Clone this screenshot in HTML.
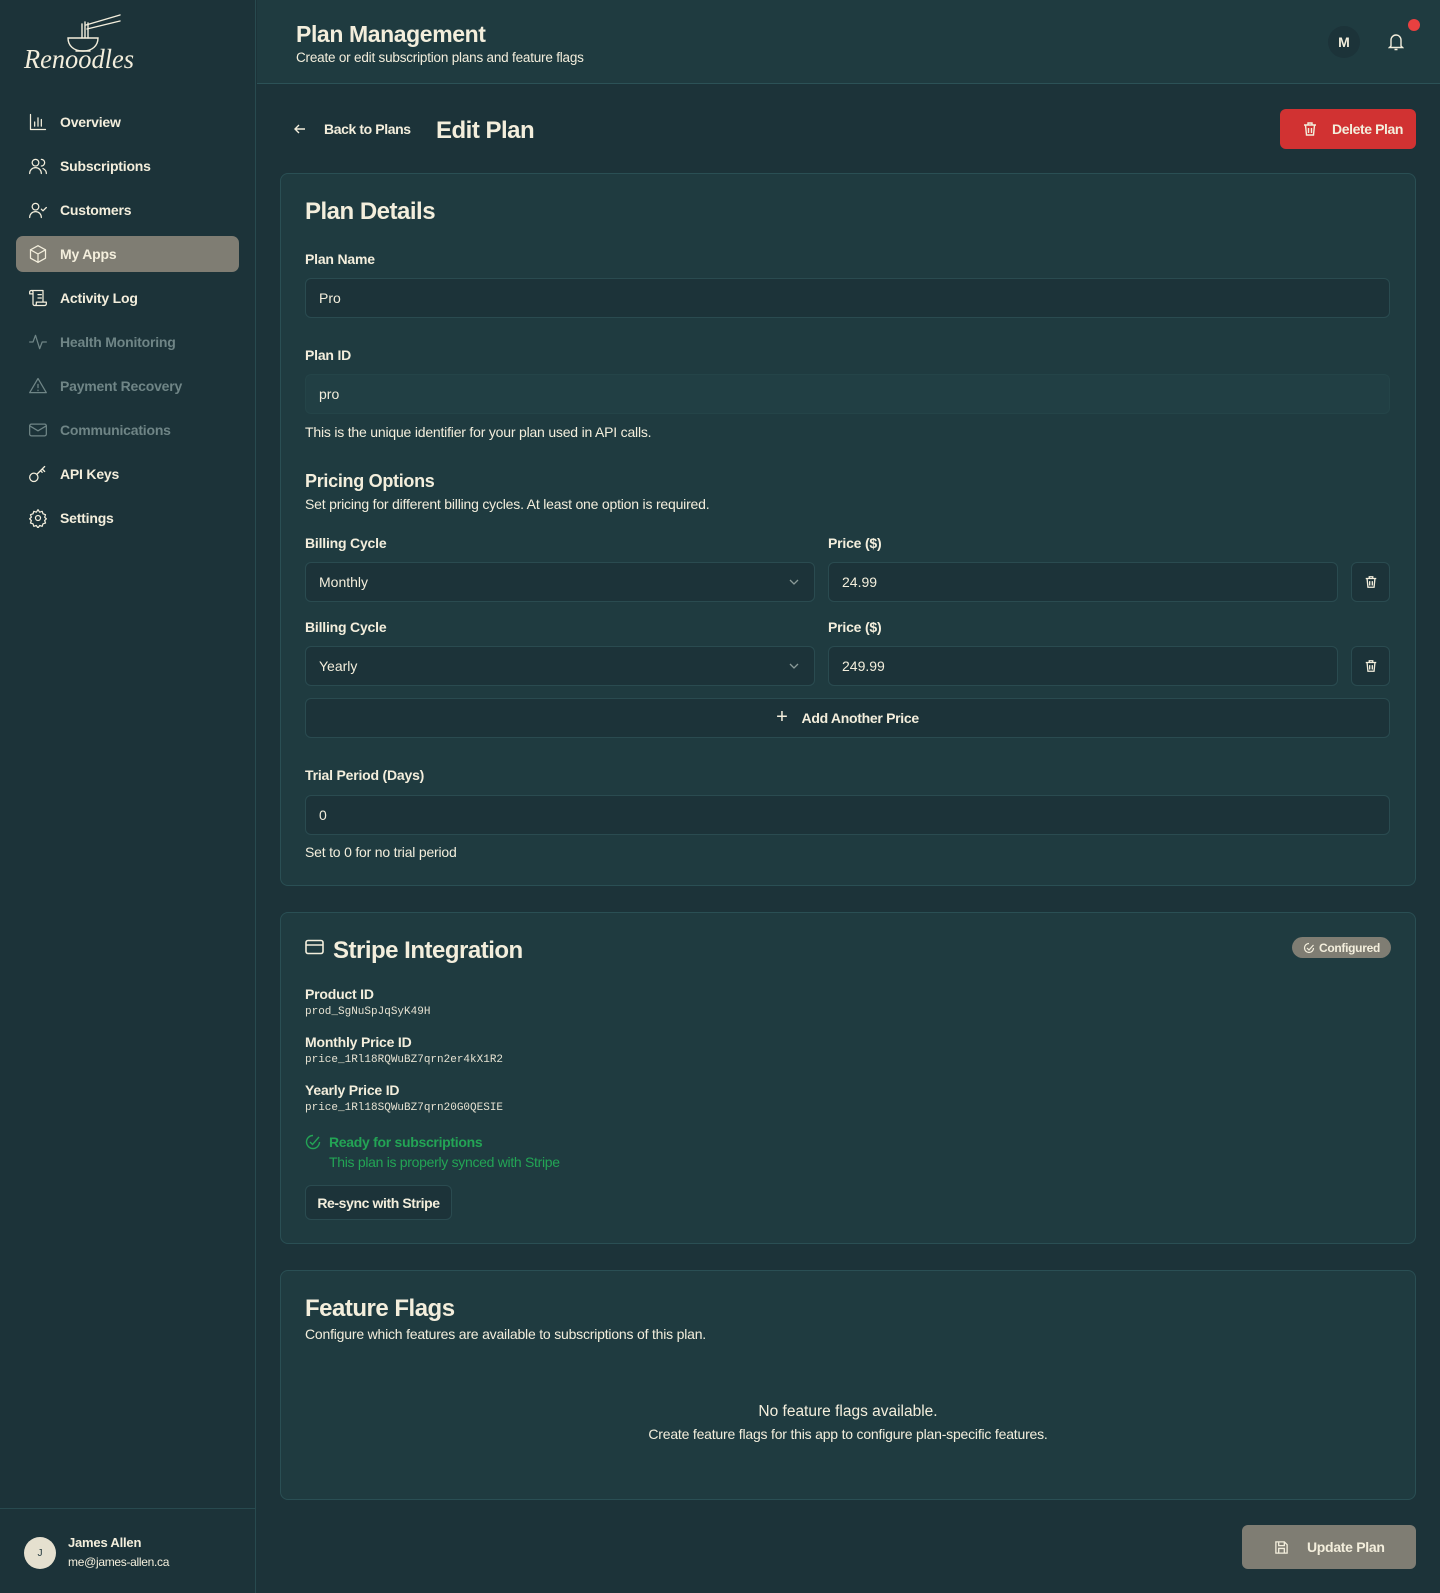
<!DOCTYPE html>
<html><head><meta charset="utf-8"><style>
*{box-sizing:border-box;margin:0;padding:0}
body{width:1440px;height:1593px;background:#1c3339;font-family:"Liberation Sans",sans-serif;color:#f3eedc;position:relative;overflow:hidden;font-size:14px}
.a{position:absolute}
.side{left:0;top:0;width:256px;height:1593px;background:#1c3339;border-right:1px solid #284a4f}
.nav{left:28px;height:20px;display:flex;align-items:center;font-weight:bold;font-size:14px;letter-spacing:-.2px}
.nav svg{width:20px;height:20px;margin-right:12px;fill:none;stroke:currentColor;stroke-width:1.5;stroke-linecap:round;stroke-linejoin:round}
.dim{color:#6f8586}
.hdr{left:257px;top:0;width:1183px;height:84px;background:#1f3b40;border-bottom:1px solid #2c5257}
.card{background:#1f3b40;border:1px solid #2a4f54;border-radius:8px}
.lbl{font-weight:bold;font-size:14px;letter-spacing:-.2px}
.inp{background:#1c3339;border:1px solid #2a4b50;border-radius:6px;height:40px;display:flex;align-items:center;padding-left:13px;font-size:14px}
.mono{font-family:"Liberation Mono",monospace;font-size:11px;color:#e6e2d2}
h2{font-size:24px;font-weight:bold;letter-spacing:-.5px}
</style></head><body>
<div class="a side">
 <svg class="a" style="left:22px;top:8px" width="120" height="66" viewBox="0 0 120 66">
  <g fill="none" stroke="#f3eedc" stroke-width="1.4" stroke-linecap="round">
   <path d="M46 30h30c0 8-6 13-15 13s-15-5-15-13z"/><path d="M54 43h14"/>
   <path d="M60 30V16M63 30V14M66 30V15"/><path d="M64 17l34-10M65 21l33-8"/>
  </g>
  <text x="2" y="60" font-family="Liberation Serif,serif" font-style="italic" font-size="27" fill="#f3eedc" textLength="110" lengthAdjust="spacingAndGlyphs">Renoodles</text>
 </svg>
 <div class="a nav" style="top:112px"><svg viewBox="0 0 24 24"><path d="M3 3v18h18M8 17v-5M12 17V7M16 17v-8"/></svg>Overview</div>
 <div class="a nav" style="top:156px"><svg viewBox="0 0 24 24"><circle cx="9" cy="8" r="4"/><path d="M2 21c0-4 3-7 7-7s7 3 7 7M16 4a4 4 0 010 8M22 21c0-3-2-5-4-6"/></svg>Subscriptions</div>
 <div class="a nav" style="top:200px"><svg viewBox="0 0 24 24"><circle cx="9" cy="8" r="4"/><path d="M2 21c0-4 3-7 7-7s7 3 7 7M16 11l2 2 4-4"/></svg>Customers</div>
 <div class="a" style="left:16px;top:236px;width:223px;height:36px;background:#7f7d73;border-radius:7px"></div>
 <div class="a nav" style="top:244px"><svg viewBox="0 0 24 24"><path d="M12 2l9 5v10l-9 5-9-5V7z"/><path d="M3 7l9 5 9-5M12 12v10"/></svg>My Apps</div>
 <div class="a nav" style="top:288px"><svg viewBox="0 0 24 24"><path d="M8 21h12a2 2 0 002-2v-2H10v2a2 2 0 11-4 0V5a2 2 0 00-2-2h14v14M4 3a2 2 0 00-2 2v2h4M12 8h4M12 12h4"/></svg>Activity Log</div>
 <div class="a nav dim" style="top:332px"><svg viewBox="0 0 24 24"><path d="M2 12h4l3-8 5 16 3-8h5"/></svg>Health Monitoring</div>
 <div class="a nav dim" style="top:376px"><svg viewBox="0 0 24 24"><path d="M12 3L2 20h20z"/><path d="M12 10v4M12 17v.5"/></svg>Payment Recovery</div>
 <div class="a nav dim" style="top:420px"><svg viewBox="0 0 24 24"><rect x="2" y="5" width="20" height="14" rx="2"/><path d="M2 7l10 6 10-6"/></svg>Communications</div>
 <div class="a nav" style="top:464px"><svg viewBox="0 0 24 24"><circle cx="7" cy="16" r="5"/><path d="M11 12l9-9M17 6l3 3M15 8l2 2"/></svg>API Keys</div>
 <div class="a nav" style="top:508px"><svg viewBox="0 0 24 24"><circle cx="12" cy="12" r="3"/><path d="M12 2l2 3 3-1 1 3 3 1-1 3 2 2-2 2 1 3-3 1-1 3-3-1-2 3-2-3-3 1-1-3-3-1 1-3-2-2 2-2-1-3 3-1 1-3 3 1z"/></svg>Settings</div>
 <div class="a" style="left:0;top:1508px;width:256px;border-top:1px solid #284a4f"></div>
 <div class="a" style="left:24px;top:1537px;width:32px;height:32px;border-radius:50%;background:#e5e0cf;color:#1c3339;font-size:10px;display:flex;align-items:center;justify-content:center">J</div>
 <div class="a" style="left:68px;top:1535px;font-weight:bold;font-size:13px;letter-spacing:-.2px">James Allen</div>
 <div class="a" style="left:68px;top:1555px;font-size:12px;letter-spacing:-.3px">me@james-allen.ca</div>
</div>
<div class="a hdr">
 <div class="a" style="left:39px;top:21px;font-size:23px;font-weight:bold;letter-spacing:-.4px">Plan Management</div>
 <div class="a" style="left:39px;top:50px;font-size:13.5px;letter-spacing:-.2px">Create or edit subscription plans and feature flags</div>
 <div class="a" style="left:1071px;top:26px;width:32px;height:32px;border-radius:50%;background:#1c3339;display:flex;align-items:center;justify-content:center;font-weight:bold;font-size:14px">M</div>
 <svg class="a" style="left:1131px;top:33px" width="16" height="18" viewBox="0 0 16 18" fill="none" stroke="#f3eedc" stroke-width="1.4"><path d="M3 13V7a5 5 0 0110 0v6l1.5 1.5h-13zM6.5 16.5h3"/></svg>
 <div class="a" style="left:1151px;top:19px;width:12px;height:12px;border-radius:50%;background:#e84040"></div>
</div>
<svg class="a" style="left:293px;top:122px" width="14" height="14" viewBox="0 0 14 14" fill="none" stroke="#f3eedc" stroke-width="1.4"><path d="M12 7H2M6 3L2 7l4 4"/></svg>
<div class="a" style="left:324px;top:121px;font-weight:bold;font-size:14px;letter-spacing:-.4px">Back to Plans</div>
<div class="a" style="left:436px;top:117px;font-weight:bold;font-size:24px;letter-spacing:-.5px">Edit Plan</div>
<div class="a" style="left:1280px;top:109px;width:136px;height:40px;background:#d13232;border-radius:6px;display:flex;align-items:center;padding-left:22px;font-weight:bold;font-size:14px;letter-spacing:-.4px"><svg width="16" height="16" viewBox="0 0 16 16" fill="none" stroke="#f3eedc" stroke-width="1.4" style="margin-right:14px"><path d="M2 4h12M6 4V2h4v2M3.5 4l1 10h7l1-10M6.5 7v5M9.5 7v5"/></svg>Delete Plan</div>

<div class="a card" style="left:280px;top:173px;width:1136px;height:713px"></div>
<h2 class="a" style="left:305px;top:198px">Plan Details</h2>
<div class="a lbl" style="left:305px;top:251px">Plan Name</div>
<div class="a inp" style="left:305px;top:278px;width:1085px">Pro</div>
<div class="a lbl" style="left:305px;top:347px">Plan ID</div>
<div class="a inp" style="left:305px;top:374px;width:1085px;background:#213f44;border-color:#244448">pro</div>
<div class="a" style="left:305px;top:424px;letter-spacing:-.2px">This is the unique identifier for your plan used in API calls.</div>
<div class="a" style="left:305px;top:471px;font-size:18px;font-weight:bold;letter-spacing:-.3px">Pricing Options</div>
<div class="a" style="left:305px;top:496px;letter-spacing:-.2px">Set pricing for different billing cycles. At least one option is required.</div>
<div class="a lbl" style="left:305px;top:535px">Billing Cycle</div>
<div class="a lbl" style="left:828px;top:535px">Price ($)</div>
<div class="a inp" style="left:305px;top:562px;width:510px">Monthly</div>
<div class="a inp" style="left:828px;top:562px;width:510px">24.99</div>
<div class="a inp" style="left:1351px;top:562px;width:39px;padding:0;justify-content:center"><svg width="14" height="14" viewBox="0 0 16 16" fill="none" stroke="#f3eedc" stroke-width="1.5"><path d="M2 4h12M6 4V2h4v2M3.5 4l1 10h7l1-10M6.5 7v5M9.5 7v5"/></svg></div>
<div class="a lbl" style="left:305px;top:619px">Billing Cycle</div>
<div class="a lbl" style="left:828px;top:619px">Price ($)</div>
<div class="a inp" style="left:305px;top:646px;width:510px">Yearly</div>
<div class="a inp" style="left:828px;top:646px;width:510px">249.99</div>
<div class="a inp" style="left:1351px;top:646px;width:39px;padding:0;justify-content:center"><svg width="14" height="14" viewBox="0 0 16 16" fill="none" stroke="#f3eedc" stroke-width="1.5"><path d="M2 4h12M6 4V2h4v2M3.5 4l1 10h7l1-10M6.5 7v5M9.5 7v5"/></svg></div>
<svg class="a" style="left:788px;top:577px" width="12" height="10" viewBox="0 0 12 10" fill="none" stroke="#8a9a98" stroke-width="1.3"><path d="M2 3l4 4 4-4"/></svg>
<svg class="a" style="left:788px;top:661px" width="12" height="10" viewBox="0 0 12 10" fill="none" stroke="#8a9a98" stroke-width="1.3"><path d="M2 3l4 4 4-4"/></svg>
<div class="a inp" style="left:305px;top:698px;width:1085px;padding:0;justify-content:center;font-weight:bold;letter-spacing:-.3px"><span style="font-size:20px;font-weight:normal;margin-right:14px;position:relative;top:-1px">+</span>Add Another Price</div>
<div class="a lbl" style="left:305px;top:767px">Trial Period (Days)</div>
<div class="a inp" style="left:305px;top:795px;width:1085px">0</div>
<div class="a" style="left:305px;top:844px;letter-spacing:-.2px">Set to 0 for no trial period</div>

<div class="a card" style="left:280px;top:912px;width:1136px;height:332px"></div>
<svg class="a" style="left:305px;top:939px" width="19" height="16" viewBox="0 0 19 16" fill="none" stroke="#f3eedc" stroke-width="1.6"><rect x="1" y="1.5" width="17" height="13" rx="2"/><path d="M1 6h17"/></svg>
<h2 class="a" style="left:333px;top:937px">Stripe Integration</h2>
<div class="a" style="left:1292px;top:937px;width:99px;height:21px;border-radius:11px;background:#7f7d73;display:flex;align-items:center;padding-left:11px;font-size:12px;font-weight:bold;letter-spacing:-.3px"><svg width="12" height="12" viewBox="0 0 12 12" fill="none" stroke="#f3eedc" stroke-width="1.2" style="margin-right:4px"><path d="M10.5 6A4.5 4.5 0 116 1.5M4 6l2 2 4.5-5"/></svg>Configured</div>
<div class="a lbl" style="left:305px;top:986px">Product ID</div>
<div class="a mono" style="left:305px;top:1006px">prod_SgNuSpJqSyK49H</div>
<div class="a lbl" style="left:305px;top:1034px">Monthly Price ID</div>
<div class="a mono" style="left:305px;top:1054px">price_1Rl18RQWuBZ7qrn2er4kX1R2</div>
<div class="a lbl" style="left:305px;top:1082px">Yearly Price ID</div>
<div class="a mono" style="left:305px;top:1102px">price_1Rl18SQWuBZ7qrn20G0QESIE</div>
<svg class="a" style="left:305px;top:1134px" width="16" height="16" viewBox="0 0 16 16" fill="none" stroke="#23a455" stroke-width="1.4"><path d="M14.5 8A6.5 6.5 0 118 1.5M5 8l2.5 2.5L14 3"/></svg>
<div class="a" style="left:329px;top:1134px;color:#23a455;font-weight:bold;letter-spacing:-.3px">Ready for subscriptions</div>
<div class="a" style="left:329px;top:1154px;color:#23a455;letter-spacing:-.3px">This plan is properly synced with Stripe</div>
<div class="a" style="left:305px;top:1185px;width:147px;height:35px;background:#1c3339;border:1px solid #2a4b50;border-radius:6px;display:flex;align-items:center;justify-content:center;font-weight:bold;letter-spacing:-.4px">Re-sync with Stripe</div>

<div class="a card" style="left:280px;top:1270px;width:1136px;height:230px"></div>
<h2 class="a" style="left:305px;top:1295px">Feature Flags</h2>
<div class="a" style="left:305px;top:1326px;letter-spacing:-.2px">Configure which features are available to subscriptions of this plan.</div>
<div class="a" style="left:280px;top:1403px;width:1136px;text-align:center;font-size:15.5px">No feature flags available.</div>
<div class="a" style="left:280px;top:1426px;width:1136px;text-align:center;letter-spacing:-.2px">Create feature flags for this app to configure plan-specific features.</div>

<div class="a" style="left:1242px;top:1525px;width:174px;height:44px;background:#7f7d73;border-radius:6px;display:flex;align-items:center;padding-left:32px;font-weight:bold;letter-spacing:-.3px"><svg width="15" height="15" viewBox="0 0 16 16" fill="none" stroke="#f3eedc" stroke-width="1.4" style="margin-right:18px"><path d="M2 2h9l3 3v9H2z"/><path d="M5 2v4h6V2M5 14V9h6v5"/></svg>Update Plan</div>
</body></html>
